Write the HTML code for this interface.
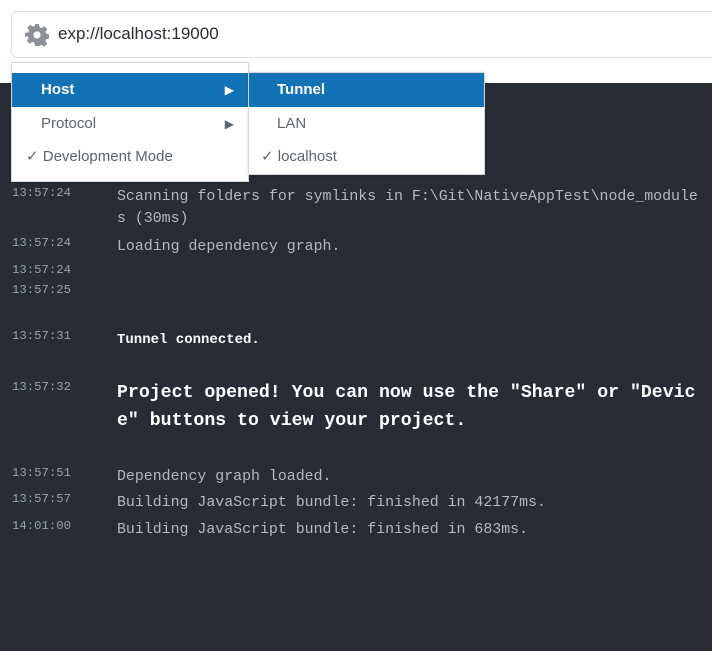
<!DOCTYPE html>
<html><head><meta charset="utf-8"><style>
*{margin:0;padding:0;box-sizing:border-box}
body{width:712px;height:651px;overflow:hidden;background:#282c34;position:relative;font-family:"Liberation Sans",sans-serif}
.top{position:absolute;left:0;top:0;width:712px;height:83px;background:#fff}
.inp{position:absolute;left:11px;top:11px;width:720px;height:47px;border:1px solid #dcdfe3;border-radius:6px;background:#fff}
.url{position:absolute;left:58px;top:24px;font-size:17px;color:#2a2d33}
.ts{position:absolute;left:12px;font-family:"Liberation Mono",monospace;font-size:12.3px;color:#9aa0aa}
.m{position:absolute;left:117px;font-family:"Liberation Mono",monospace;font-size:14.9px;color:#b4b8bf;line-height:22px}
.w{color:#fff;font-weight:bold;font-size:14px}
.big{color:#fff;font-weight:bold;font-size:18.2px;line-height:28px}
.menu{position:absolute;background:#fff;border:1px solid #d6d9dd;box-shadow:0 1px 4px rgba(0,0,0,.15)}
.it{position:absolute;left:0;right:0;height:34px;font-size:15px;color:#5d6470;line-height:34px}
.sel{background:#1272b6;color:#fff}
.ar{position:absolute;right:14px;font-size:12px}
</style></head><body>
<div class="top"></div>
<div class="inp"></div>
<svg style="position:absolute;left:25px;top:23px" width="24" height="24" viewBox="0 0 24 24"><path fill="#8c9097" d="M10 1h4l.6 3.2 2 .9 2.8-1.8 2.8 2.8-1.8 2.8.9 2 3.2.6v4l-3.2.6-.9 2 1.8 2.8-2.8 2.8-2.8-1.8-2 .9L14 23h-4l-.6-3.2-2-.9-2.8 1.8-2.8-2.8 1.8-2.8-.9-2L0 14v-4l3.2-.6.9-2L2.3 4.6l2.8-2.8 2.8 1.8 2-.9z"/><circle cx="12" cy="12" r="3.6" fill="#fff"/></svg>
<div class="url">exp://localhost:19000</div>

<div class="ts" style="top:186px">13:57:24</div>
<div class="m" style="top:186px;width:590px">Scanning folders for symlinks in F:\Git\NativeAppTest\node_module<br>s (30ms)</div>
<div class="ts" style="top:236px">13:57:24</div>
<div class="m" style="top:236px">Loading dependency graph.</div>
<div class="ts" style="top:263px">13:57:24</div>
<div class="ts" style="top:283px">13:57:25</div>
<div class="ts" style="top:329px">13:57:31</div>
<div class="m w" style="top:329px">Tunnel connected.</div>
<div class="ts" style="top:380px">13:57:32</div>
<div class="m big" style="top:379px">Project opened! You can now use the "Share" or "Devic<br>e" buttons to view your project.</div>
<div class="ts" style="top:466px">13:57:51</div>
<div class="m" style="top:466px">Dependency graph loaded.</div>
<div class="ts" style="top:492px">13:57:57</div>
<div class="m" style="top:492px">Building JavaScript bundle: finished in 42177ms.</div>
<div class="ts" style="top:519px">14:01:00</div>
<div class="m" style="top:519px">Building JavaScript bundle: finished in 683ms.</div>

<div class="menu" style="left:11px;top:62px;width:238px;height:120px">
<div class="it sel" style="top:10px"><span style="position:absolute;left:29px;font-weight:bold">Host</span><span class="ar">▶</span></div>
<div class="it" style="top:44px"><span style="position:absolute;left:29px">Protocol</span><span class="ar">▶</span></div>
<div class="it" style="top:77px"><span style="position:absolute;left:14px">✓ Development Mode</span></div>
</div>
<div class="menu" style="left:248px;top:72px;width:237px;height:103px">
<div class="it sel" style="top:0"><span style="position:absolute;left:28px;font-weight:bold">Tunnel</span></div>
<div class="it" style="top:34px"><span style="position:absolute;left:28px">LAN</span></div>
<div class="it" style="top:67px"><span style="position:absolute;left:12px">✓ localhost</span></div>
</div>
</body></html>
